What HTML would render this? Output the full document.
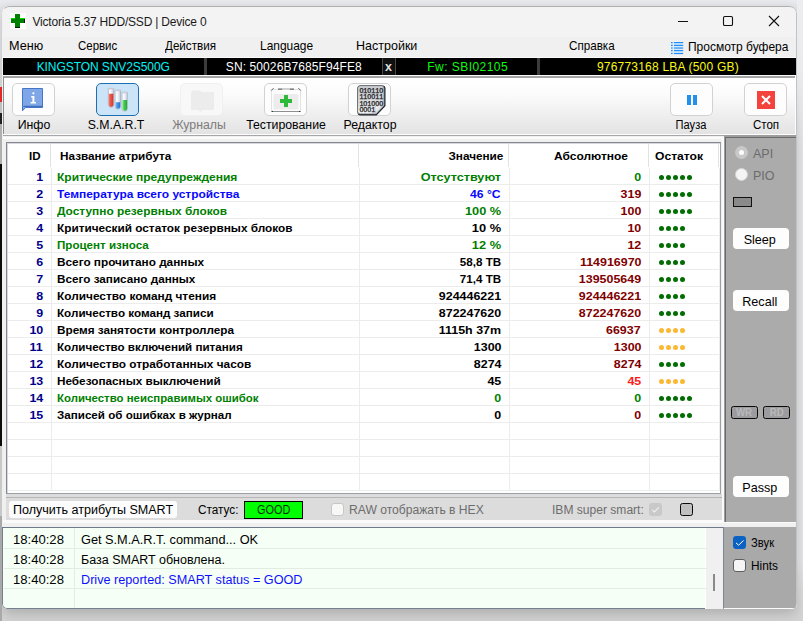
<!DOCTYPE html>
<html>
<head>
<meta charset="utf-8">
<title>Victoria 5.37 HDD/SSD | Device 0</title>
<style>
*{box-sizing:border-box;margin:0;padding:0}
html,body{width:803px;height:621px;overflow:hidden}
body{background:#e7e8eb;font-family:"Liberation Sans",sans-serif;font-size:12px;color:#000;position:relative}
.abs{position:absolute}
.bgtop{left:0;top:0;width:803px;height:12px;background:linear-gradient(#eaebef,#e1e2e6)}
.bgbot{left:0;top:560px;width:803px;height:61px;background:linear-gradient(rgba(200,200,200,0),rgba(212,212,212,1))}
.fadetr{left:797px;top:0;width:6px;height:150px;background:linear-gradient(rgba(236,237,240,1) 0%,rgba(236,237,240,.9) 45%,rgba(236,237,240,0) 100%)}
.shadow{left:2px;top:6px;width:795px;height:603px;border-radius:7px 7px 5px 5px;box-shadow:0 5px 13px 0 rgba(0,0,0,.2)}
#win{left:2px;top:6px;width:795px;height:603px;border-radius:7px 7px 5px 5px;background:#f0f0f0;overflow:hidden}
#frame{position:absolute;left:2px;top:6px;width:795px;height:603px;border-radius:7px 7px 5px 5px;border:1px solid;border-color:#b0b0b0 #c2c2c2 transparent transparent}
#inner{position:absolute;left:-2px;top:-6px;width:803px;height:621px}
.title{left:3px;top:7px;width:793px;height:30px;background:#f3f3f3}
.title .txt{left:33px;top:14px;font-size:12px;letter-spacing:-0.2px;color:#1a1a1a;white-space:nowrap}
.menu{left:3px;top:37px;width:793px;height:21px;background:#f0f0f0}
.mi{position:absolute;top:39px;font-size:12.4px;white-space:nowrap;color:#000;transform-origin:0 50%}
.strip{left:3px;top:58px;width:793px;height:17px;background:#000}
.strip span{position:absolute;top:2px;font-size:12px;white-space:nowrap;line-height:15px}
.sep{position:absolute;top:58px;width:3px;height:17px;background:#3c3c3c}
.tb{left:3px;top:76px;width:792px;height:58px;border-top:2px solid #a4a4a4;border-left:1px solid #8c8c8c;background:linear-gradient(#ffffff 0%,#fbfbfb 30%,#e3e3e3 100%)}
.tb2{left:3px;top:134px;width:793px;height:2px;background:#fdfdfd;border-bottom:1px solid #a6a6a6}
.btn{position:absolute;top:83px;width:43px;height:33px;border:1px solid #d2d2d2;border-radius:5px;background:#fdfdfd}
.btn.sel{background:#cce4f7;border-color:#1a6fb5}
.btn.dis{background:#f8f8f8;border-color:#f0f0f0}
.lbl{position:absolute;top:118px;font-size:12.3px;white-space:nowrap;text-align:center;line-height:15px}

/* table */
.tblwrap{left:6px;top:142px;width:715px;height:352px;border:1px solid #828790;border-right-color:#9a9ea6;border-bottom-color:#9a9ea6;background:#fff}
.tblin{left:7px;top:143px;width:713px;height:350px;border:1px solid #d8d8dc;border-right:none;border-bottom:none;background:#fff;overflow:hidden}
.hdr{position:absolute;left:8px;top:144px;width:711px;height:23px;background:#fff}
.hline{position:absolute;left:8px;width:711px;height:1px;background:#ececec}
.vline{position:absolute;top:144px;width:1px;height:347px;background:#ececec}
.vh{position:absolute;top:144px;width:1px;height:23px;background:#e2e2e2}
.c{position:absolute;font-weight:bold;font-size:11px;white-space:nowrap;line-height:13px;height:13px}
.c.l{transform-origin:0 50%;transform:scaleX(1.09)}
.c.r{transform-origin:100% 50%;transform:scaleX(1.09);text-align:right}
.g{color:#008000}.b{color:#0808ff}.n{color:#00008b}.m{color:#800000}.rd{color:#ff1a1a}.k{color:#000}
.dots{position:absolute;height:5px}
.dots i{position:absolute;top:0;width:5.400px;height:5.400px;border-radius:50%}
.dg i{background:#006e00}.dy i{background:#fdb833}
/* right panel */
.rp{background:#ababab;border-left:2px solid #8e8e8e;border-top:2px solid #8e8e8e}
.wbtn{position:absolute;background:#fdfdfd;border-radius:4px;font-size:12.6px;text-align:center;color:#000}
.lg{font-size:12px;line-height:14px;white-space:nowrap;transform-origin:0 50%}
.sb{font-size:12px;line-height:14px;white-space:nowrap;transform-origin:0 50%;transform:scaleX(1.04)}
.wr{top:405.800px;width:27px;height:13.100px;background:#9c9c9e;border:1.500px solid #0a0a0a;border-radius:2.500px;color:#b9b9bb;font-weight:bold;font-size:10.800px;line-height:11.800px;text-align:center}
.wr span{display:inline-block;transform:scaleX(.9)}
</style>
</head>
<body>
<div class="abs bgtop"></div><div class="abs bgbot"></div>
<div class="abs shadow"></div>
<div class="abs" style="left:0;top:58px;width:2px;height:29px;background:#d0d0d0"></div>
<div class="abs" style="left:0;top:87px;width:2px;height:15px;background:#e02828"></div>
<div class="abs" style="left:0;top:102px;width:2px;height:11px;background:#c0c0c0"></div>
<div class="abs" style="left:0;top:113px;width:2px;height:11px;background:#202020"></div>
<div class="abs" style="left:0;top:124px;width:2px;height:40px;background:#b0b0b0"></div>
<div class="abs" style="left:0;top:164px;width:2px;height:282px;background:#0c0c0c"></div>
<div class="abs" style="left:0;top:446px;width:2px;height:70px;background:#c6c9c8"></div>
<div class="abs" style="left:0;top:516px;width:2px;height:105px;background:#a9a9a9"></div>
<div class="abs fadetr"></div>
<div class="abs" id="win"><div id="inner">

<!-- title bar -->
<div class="abs title"></div>
<svg class="abs" style="left:10px;top:13px" width="16" height="16" viewBox="0 0 16 16">
  <rect width="16" height="16" fill="#fff"/>
  <path d="M5 1h5v4h5v5h-5v5h-5v-5h-4v-5h4z" fill="#008000"/>
  <path d="M1 5h4v1h-4zM10 5h5v1h-5z" fill="#00e400"/>
  <path d="M14 6h1v4h-1zM5 14h5v1h-5z" fill="#021602"/>
</svg>
<div class="abs title txt" style="background:none;width:auto;height:auto;left:32.5px;top:15px;font-size:12px;letter-spacing:-0.2px;white-space:nowrap;color:#1b1b1b">Victoria 5.37 HDD/SSD | Device 0</div>
<svg class="abs" style="left:672px;top:10px" width="120" height="24" viewBox="0 0 120 24">
  <path d="M6 11.5h10" stroke="#111" stroke-width="1" fill="none"/>
  <rect x="51.5" y="6.5" width="9" height="9" rx="1.3" stroke="#111" stroke-width="1.1" fill="none"/>
  <path d="M97 6l10 10M107 6l-10 10" stroke="#111" stroke-width="1.1" fill="none"/>
</svg>

<!-- menu -->
<div class="abs menu"></div>
<div class="mi" style="left:8.5px;transform:scaleX(1.02)">Меню</div>
<div class="mi" style="left:78px;transform:scaleX(.925)">Сервис</div>
<div class="mi" style="left:165px;transform:scaleX(.94)">Действия</div>
<div class="mi" style="left:259.5px;transform:scaleX(.963)">Language</div>
<div class="mi" style="left:355.5px;transform:scaleX(1.01)">Настройки</div>
<div class="mi" style="left:569px;transform:scaleX(.94)">Справка</div>
<svg class="abs" style="left:671px;top:41px" width="13" height="14" viewBox="0 0 13 14">
  <rect x="0" y="1.200" width="12" height="12" fill="#d4e7fb" opacity=".75"/>
  <g fill="#1e8fff"><rect x="0" y="1" width="1.600" height="1.200"/><rect x="3" y="1" width="9.200" height="1.200"/>
  <rect x="0" y="3.800" width="1.600" height="1.200"/><rect x="3" y="3.800" width="9.200" height="1.200"/>
  <rect x="0" y="9" width="1.600" height="1.200"/><rect x="3" y="9" width="9.200" height="1.200"/>
  <rect x="0" y="11.900" width="1.600" height="1.200"/><rect x="3" y="11.900" width="9.200" height="1.200"/></g>
  <g fill="#5cacf8"><rect x="0" y="6.200" width="1.600" height="1.700"/><rect x="3" y="6.200" width="9.200" height="1.700"/></g>
</svg>
<div class="mi" style="left:688px;top:40px;font-size:12.4px;transform:scaleX(.968)">Просмотр буфера</div>

<!-- black strip -->
<div class="abs strip"></div>
<div class="abs strip" style="background:none">
  <span style="left:33.7px;color:#00f4f4;letter-spacing:-0.08px">KINGSTON SNV2S500G</span>
  <span style="left:222.8px;color:#ffffff;letter-spacing:0.1px">SN: 50026B7685F94FE8</span>
  <span style="left:424.3px;color:#10fa10;letter-spacing:.45px">Fw: SBI02105</span>
  <span style="left:594px;color:#fafa14;letter-spacing:0.2px">976773168 LBA (500 GB)</span>
</div>
<div class="sep" style="left:204px"></div>
<div class="sep" style="left:537px"></div>
<div class="abs" style="left:381.500px;top:58px;width:14px;height:17px;background:#101010;border-left:1.500px solid #484848;border-right:1.500px solid #484848;color:#dedede;font-weight:bold;font-size:12.500px;line-height:18px;text-align:center">x</div>

<!-- toolbar -->
<div class="abs tb"></div><div class="abs tb2"></div><div class="abs" style="left:795px;top:76px;width:1px;height:59px;background:#fdfdfd"></div>
<div class="abs" style="left:3px;top:57px;width:793px;height:1px;background:#fbfbfb"></div><div class="abs" style="left:3px;top:75px;width:793px;height:1px;background:#fbfbfb"></div>
<!-- Инфо -->
<div class="btn" style="left:12px"></div>
<svg class="abs" style="left:20px;top:86px" width="26" height="27" viewBox="0 0 26 27">
  <path d="M2.5 2.5h20v19h-17l-3 3.3z" fill="#7fa6e6" stroke="#4676c6" stroke-width="1"/>
  <path d="M3 21h19.5v-1.2h-18.3z" fill="#3f6fc0"/>
  <rect x="12.3" y="6.2" width="2.2" height="2.2" rx="1.1" fill="#fff"/>
  <path d="M11.2 10h3.2v6h1.6v1.4h-5.4v-1.4h1.8v-4.6h-1.2z" fill="#fff"/>
</svg>
<div class="lbl" style="left:3px;width:62px">Инфо</div>
<!-- SMART -->
<div class="btn sel" style="left:96px"></div>
<svg class="abs" style="left:104px;top:86px" width="28" height="28" viewBox="0 0 28 28">
  <defs>
    <linearGradient id="gl" x1="0" x2="1"><stop offset="0" stop-color="#f4f6fb" stop-opacity=".95"/><stop offset=".35" stop-color="#ffffff" stop-opacity=".9"/><stop offset=".7" stop-color="#dfe3ee" stop-opacity=".9"/><stop offset="1" stop-color="#c3c7d6" stop-opacity=".95"/></linearGradient>
    <linearGradient id="lr" x1="0" x2="1"><stop offset="0" stop-color="#f0857b"/><stop offset=".35" stop-color="#ee5a4e"/><stop offset="1" stop-color="#d63428"/></linearGradient>
    <linearGradient id="lb" x1="0" x2="1"><stop offset="0" stop-color="#8cc0f4"/><stop offset=".35" stop-color="#4c9aea"/><stop offset="1" stop-color="#2272d0"/></linearGradient>
    <linearGradient id="lgn" x1="0" x2="1"><stop offset="0" stop-color="#8ee696"/><stop offset=".35" stop-color="#44cf50"/><stop offset="1" stop-color="#22aa30"/></linearGradient>
  </defs>
  <path d="M4.3 2.5h5.4v16.1a2.7 2.7 0 0 1 -5.4 0z" fill="url(#gl)" stroke="#a9adbd" stroke-width=".7"/><path d="M4.6499999999999995 7.7h4.7v10.900000000000002a2.35 2.35 0 0 1 -4.7 0z" fill="url(#lr)"/><rect x="3.9" y="2.2" width="6.2" height="1" rx=".5" fill="#d4d7e2" stroke="#b4b7c6" stroke-width=".3"/>
  <path d="M11.1 4.3h5.4v16.1a2.7 2.7 0 0 1 -5.4 0z" fill="url(#gl)" stroke="#a9adbd" stroke-width=".7"/><path d="M11.45 16.2h4.7v4.200000000000003a2.35 2.35 0 0 1 -4.7 0z" fill="url(#lb)"/><rect x="10.7" y="4.0" width="6.2" height="1" rx=".5" fill="#d4d7e2" stroke="#b4b7c6" stroke-width=".3"/>
  <path d="M18.0 6.4h5.4v16.1a2.7 2.7 0 0 1 -5.4 0z" fill="url(#gl)" stroke="#a9adbd" stroke-width=".7"/><path d="M18.35 14.0h4.7v8.500000000000004a2.35 2.35 0 0 1 -4.7 0z" fill="url(#lgn)"/><rect x="17.6" y="6.1000000000000005" width="6.2" height="1" rx=".5" fill="#d4d7e2" stroke="#b4b7c6" stroke-width=".3"/>
</svg>
<div class="lbl" style="left:85px;width:62px">S.M.A.R.T</div>
<!-- Журналы -->
<div class="btn dis" style="left:180px"></div>
<svg class="abs" style="left:188px;top:88px" width="28" height="26" viewBox="0 0 28 26">
  <path d="M3 4.5l2-2h7l1.5 1.5h12.5v18h-11.5l-2.2 2-1.8-2h-7.5z" fill="#ececec"/>
</svg>
<div class="lbl" style="left:168px;width:62px;color:#7c7c7c">Журналы</div>
<!-- Тестирование -->
<div class="btn" style="left:264px"></div>
<svg class="abs" style="left:270px;top:86px" width="32" height="28" viewBox="0 0 32 28">
  <rect x="1.5" y="3.5" width="29" height="22" rx="1.5" fill="#fdfdfd" stroke="#e2e2e2" stroke-width="1"/>
  <rect x="3.5" y="8" width="25" height="15.5" rx="1.5" fill="#ececec"/>
  <path d="M1.2 4.5l2.3-2.3M30.8 4.5l-2.3-2.3" stroke="#555" stroke-width="1" fill="none"/>
  <path d="M8 3.2h5M19 3.2h5" stroke="#666" stroke-width="1.2"/>
  <rect x="12" y="2" width="8" height="1.8" fill="#cfcfcf"/>
  <path d="M2 25.5h28" stroke="#7a7a7a" stroke-width=".8"/><path d="M1.5 25.5h1.500M29 25.500h1.500" stroke="#333" stroke-width="1"/>
  <path d="M14 9h4v4h4v4h-4v4h-4v-4h-4v-4h4z" fill="#2fb93a"/>
</svg>
<div class="lbl" style="left:236px;width:100px">Тестирование</div>
<!-- Редактор -->
<div class="btn" style="left:348px"></div>
<svg class="abs" style="left:355px;top:83px" width="34" height="35" viewBox="0 0 34 35">
  <defs><linearGradient id="pg" x1="0" y1="0" x2="0" y2="1"><stop offset="0" stop-color="#c9cbcd"/><stop offset=".6" stop-color="#dcdddf"/><stop offset="1" stop-color="#f6f6f6"/></linearGradient>
  <linearGradient id="fold" x1="0" y1="0" x2="1" y2="1"><stop offset="0" stop-color="#ffffff"/><stop offset="1" stop-color="#b8babd"/></linearGradient></defs>
  <path d="M5.5 2.5h22a3 3 0 0 1 3 3v17.5l-9 9.5h-16a3 3 0 0 1-3-3v-24a3 3 0 0 1 3-3z" fill="#20262c"/>
  <path d="M5.2 2.6h21.3a2.6 2.6 0 0 1 2.6 2.6v17l-8.3 8.8h-15.6a2.6 2.6 0 0 1-2.6-2.6v-23.2a2.6 2.6 0 0 1 2.6-2.600z" fill="url(#pg)" stroke="#56616b" stroke-width=".8"/>
  <path d="M29 22.3c-3-.6-6.500-.2-8.500.8c-.9 2.600-.6 5.400.300 7.800z" fill="url(#fold)" stroke="#9a9da0" stroke-width=".4"/>
  <g font-family="Liberation Mono, monospace" font-size="6.600" font-weight="400" fill="#14181d" stroke="#14181d" stroke-width=".25" letter-spacing="0">
    <text x="4.400" y="9.600">O1O11O</text><text x="4.400" y="16.200">11OO11</text><text x="4.400" y="22.500">1O1OOO</text><text x="4.400" y="28.700">OOO1</text>
  </g>
</svg>
<div class="lbl" style="left:334px;width:72px">Редактор</div>
<!-- Пауза -->
<div class="btn" style="left:670px"></div>
<div class="abs" style="left:687px;top:95px;width:4px;height:10px;background:#2392ec"></div>
<div class="abs" style="left:693px;top:95px;width:4px;height:10px;background:#2392ec"></div>
<div class="lbl" style="left:659.5px;width:62px;transform:scaleX(.9)">Пауза</div>
<!-- Стоп -->
<div class="btn" style="left:744px"></div>
<svg class="abs" style="left:757px;top:91px" width="18" height="18" viewBox="0 0 18 18">
  <rect width="18" height="18" fill="#f4433c"/>
  <path d="M5 5l8 8M13 5l-8 8" stroke="#fff" stroke-width="2" fill="none"/>
</svg>
<div class="lbl" style="left:734.5px;width:62px;transform:scaleX(.94)">Стоп</div>

<!-- table -->
<div class="abs tblwrap"></div>
<div class="abs tblin"></div>
<div class="c l k" style="left:28.8px;top:150px;transform:scaleX(1.05)">ID</div>
<div class="c l k" style="left:60px;top:150px;transform:scaleX(1.067)">Название атрибута</div>
<div class="c r k" style="right:300px;top:150px;transform:scaleX(1.07)">Значение</div>
<div class="c r k" style="right:175px;top:150px;transform:scaleX(1.088)">Абсолютное</div>
<div class="c l k" style="left:655px;top:150px;transform:scaleX(1.1)">Остаток</div>
<div class="vline" style="left:51px;top:168px;height:323px"></div><div class="vh" style="left:50px"></div>
<div class="vline" style="left:359px;top:168px;height:323px"></div><div class="vh" style="left:358px"></div>
<div class="vline" style="left:509px;top:168px;height:323px"></div><div class="vh" style="left:508px"></div>
<div class="vline" style="left:649px;top:168px;height:323px"></div><div class="vh" style="left:648px"></div>
<div class="vline" style="left:719px;top:168px;height:323px"></div><div class="vh" style="left:718px"></div>
<div class="hline" style="top:184px"></div>
<div class="hline" style="top:201px"></div>
<div class="hline" style="top:218px"></div>
<div class="hline" style="top:235px"></div>
<div class="hline" style="top:252px"></div>
<div class="hline" style="top:269px"></div>
<div class="hline" style="top:286px"></div>
<div class="hline" style="top:303px"></div>
<div class="hline" style="top:320px"></div>
<div class="hline" style="top:337px"></div>
<div class="hline" style="top:354px"></div>
<div class="hline" style="top:371px"></div>
<div class="hline" style="top:388px"></div>
<div class="hline" style="top:405px"></div>
<div class="hline" style="top:422px"></div>
<div class="hline" style="top:439px"></div>
<div class="hline" style="top:456px"></div>
<div class="hline" style="top:473px"></div>
<div class="hline" style="top:490px"></div>
<div class="c r n" style="right:760.2px;top:171px;transform:scaleX(1.13)">1</div><div class="c l g" style="left:57.3px;top:171px;transform:scaleX(1.093)">Критические предупреждения</div><div class="c r g" style="right:302px;top:171px;transform:scaleX(1.147)">Отсутствуют</div><div class="c r g" style="right:162px;top:171px;transform:scaleX(1.13)">0</div><div class="dots dg" style="left:658.6px;top:174.8px"><i style="left:0px"></i><i style="left:7px"></i><i style="left:14px"></i><i style="left:21px"></i><i style="left:28px"></i></div>
<div class="c r n" style="right:760.2px;top:188px;transform:scaleX(1.13)">2</div><div class="c l b" style="left:57.3px;top:188px;transform:scaleX(1.085)">Температура всего устройства</div><div class="c r b" style="right:302px;top:188px;transform:scaleX(1.105)">46 °C</div><div class="c r m" style="right:162px;top:188px;transform:scaleX(1.13)">319</div><div class="dots dg" style="left:658.6px;top:191.8px"><i style="left:0px"></i><i style="left:7px"></i><i style="left:14px"></i><i style="left:21px"></i><i style="left:28px"></i></div>
<div class="c r n" style="right:760.2px;top:205px;transform:scaleX(1.13)">3</div><div class="c l g" style="left:57.3px;top:205px;transform:scaleX(1.08)">Доступно резервных блоков</div><div class="c r g" style="right:302px;top:205px;transform:scaleX(1.16)">100 %</div><div class="c r m" style="right:162px;top:205px;transform:scaleX(1.13)">100</div><div class="dots dg" style="left:658.6px;top:208.8px"><i style="left:0px"></i><i style="left:7px"></i><i style="left:14px"></i><i style="left:21px"></i><i style="left:28px"></i></div>
<div class="c r n" style="right:760.2px;top:222px;transform:scaleX(1.13)">4</div><div class="c l k" style="left:57.3px;top:222px;transform:scaleX(1.073)">Критический остаток резервных блоков</div><div class="c r k" style="right:302px;top:222px;transform:scaleX(1.166)">10 %</div><div class="c r m" style="right:162px;top:222px;transform:scaleX(1.13)">10</div><div class="dots dg" style="left:658.6px;top:225.8px"><i style="left:0px"></i><i style="left:7px"></i><i style="left:14px"></i><i style="left:21px"></i></div>
<div class="c r n" style="right:760.2px;top:239px;transform:scaleX(1.13)">5</div><div class="c l g" style="left:57.3px;top:239px;transform:scaleX(1.053)">Процент износа</div><div class="c r g" style="right:302px;top:239px;transform:scaleX(1.166)">12 %</div><div class="c r m" style="right:162px;top:239px;transform:scaleX(1.13)">12</div><div class="dots dg" style="left:658.6px;top:242.8px"><i style="left:0px"></i><i style="left:7px"></i><i style="left:14px"></i><i style="left:21px"></i></div>
<div class="c r n" style="right:760.2px;top:256px;transform:scaleX(1.13)">6</div><div class="c l k" style="left:57.3px;top:256px;transform:scaleX(1.072)">Всего прочитано данных</div><div class="c r k" style="right:302px;top:256px;transform:scaleX(1.056)">58,8 TB</div><div class="c r m" style="right:162px;top:256px;transform:scaleX(1.13)">114916970</div><div class="dots dg" style="left:658.6px;top:259.8px"><i style="left:0px"></i><i style="left:7px"></i><i style="left:14px"></i><i style="left:21px"></i></div>
<div class="c r n" style="right:760.2px;top:273px;transform:scaleX(1.13)">7</div><div class="c l k" style="left:57.3px;top:273px;transform:scaleX(1.065)">Всего записано данных</div><div class="c r k" style="right:302px;top:273px;transform:scaleX(1.056)">71,4 TB</div><div class="c r m" style="right:162px;top:273px;transform:scaleX(1.13)">139505649</div><div class="dots dg" style="left:658.6px;top:276.8px"><i style="left:0px"></i><i style="left:7px"></i><i style="left:14px"></i><i style="left:21px"></i></div>
<div class="c r n" style="right:760.2px;top:290px;transform:scaleX(1.13)">8</div><div class="c l k" style="left:57.3px;top:290px;transform:scaleX(1.078)">Количество команд чтения</div><div class="c r k" style="right:302px;top:290px;transform:scaleX(1.13)">924446221</div><div class="c r m" style="right:162px;top:290px;transform:scaleX(1.13)">924446221</div><div class="dots dg" style="left:658.6px;top:293.8px"><i style="left:0px"></i><i style="left:7px"></i><i style="left:14px"></i><i style="left:21px"></i></div>
<div class="c r n" style="right:760.2px;top:307px;transform:scaleX(1.13)">9</div><div class="c l k" style="left:57.3px;top:307px;transform:scaleX(1.061)">Количество команд записи</div><div class="c r k" style="right:302px;top:307px;transform:scaleX(1.13)">872247620</div><div class="c r m" style="right:162px;top:307px;transform:scaleX(1.13)">872247620</div><div class="dots dg" style="left:658.6px;top:310.8px"><i style="left:0px"></i><i style="left:7px"></i><i style="left:14px"></i><i style="left:21px"></i></div>
<div class="c r n" style="right:760.2px;top:324px;transform:scaleX(1.13)">10</div><div class="c l k" style="left:57.3px;top:324px;transform:scaleX(1.067)">Время занятости контроллера</div><div class="c r k" style="right:302px;top:324px;transform:scaleX(1.13)">1115h 37m</div><div class="c r m" style="right:162px;top:324px;transform:scaleX(1.13)">66937</div><div class="dots dy" style="left:658.6px;top:327.8px"><i style="left:0px"></i><i style="left:7px"></i><i style="left:14px"></i><i style="left:21px"></i></div>
<div class="c r n" style="right:760.2px;top:341px;transform:scaleX(1.13)">11</div><div class="c l k" style="left:57.3px;top:341px;transform:scaleX(1.055)">Количество включений питания</div><div class="c r k" style="right:302px;top:341px;transform:scaleX(1.13)">1300</div><div class="c r m" style="right:162px;top:341px;transform:scaleX(1.13)">1300</div><div class="dots dy" style="left:658.6px;top:344.8px"><i style="left:0px"></i><i style="left:7px"></i><i style="left:14px"></i><i style="left:21px"></i></div>
<div class="c r n" style="right:760.2px;top:358px;transform:scaleX(1.13)">12</div><div class="c l k" style="left:57.3px;top:358px;transform:scaleX(1.076)">Количество отработанных часов</div><div class="c r k" style="right:302px;top:358px;transform:scaleX(1.13)">8274</div><div class="c r m" style="right:162px;top:358px;transform:scaleX(1.13)">8274</div><div class="dots dg" style="left:658.6px;top:361.8px"><i style="left:0px"></i><i style="left:7px"></i><i style="left:14px"></i><i style="left:21px"></i></div>
<div class="c r n" style="right:760.2px;top:375px;transform:scaleX(1.13)">13</div><div class="c l k" style="left:57.3px;top:375px;transform:scaleX(1.068)">Небезопасных выключений</div><div class="c r k" style="right:302px;top:375px;transform:scaleX(1.13)">45</div><div class="c r rd" style="right:162px;top:375px;transform:scaleX(1.13)">45</div><div class="dots dy" style="left:658.6px;top:378.8px"><i style="left:0px"></i><i style="left:7px"></i><i style="left:14px"></i><i style="left:21px"></i></div>
<div class="c r n" style="right:760.2px;top:392px;transform:scaleX(1.13)">14</div><div class="c l g" style="left:57.3px;top:392px;transform:scaleX(1.037)">Количество неисправимых ошибок</div><div class="c r g" style="right:302px;top:392px;transform:scaleX(1.13)">0</div><div class="c r g" style="right:162px;top:392px;transform:scaleX(1.13)">0</div><div class="dots dg" style="left:658.6px;top:395.8px"><i style="left:0px"></i><i style="left:7px"></i><i style="left:14px"></i><i style="left:21px"></i><i style="left:28px"></i></div>
<div class="c r n" style="right:760.2px;top:409px;transform:scaleX(1.13)">15</div><div class="c l k" style="left:57.3px;top:409px;transform:scaleX(1.056)">Записей об ошибках в журнал</div><div class="c r k" style="right:302px;top:409px;transform:scaleX(1.13)">0</div><div class="c r m" style="right:162px;top:409px;transform:scaleX(1.13)">0</div><div class="dots dg" style="left:658.6px;top:412.8px"><i style="left:0px"></i><i style="left:7px"></i><i style="left:14px"></i><i style="left:21px"></i><i style="left:28px"></i></div>
<!-- right panel -->
<div class="abs" style="left:3px;top:136.5px;width:721px;height:2px;background:#fbfbfb"></div>
<div class="abs" style="left:722px;top:136.5px;width:2.2px;height:386px;background:#fafafa"></div>
<div class="abs" style="left:724.2px;top:135.3px;width:72.8px;height:387.700px;background:#9e9e9e"></div>
<div class="abs" style="left:725px;top:137.3px;width:71px;height:384.300px;background:#6a6a6a"></div>
<div class="abs" style="left:726.2px;top:138.3px;width:70px;height:383.300px;background:#ababab"></div>
<div class="abs" style="left:796px;top:135.3px;width:1px;height:388px;background:#fbfbfb"></div><div class="abs" style="left:724.2px;top:521.6px;width:73px;height:1.400px;background:#fbfbfb"></div>
<div class="abs" style="left:735px;top:145.9px;width:13px;height:13px;border-radius:50%;background:#c8c8c8"></div>
<div class="abs" style="left:738.9px;top:149.8px;width:5.200px;height:5.200px;border-radius:50%;background:#fdfdfd"></div>
<div class="abs" style="left:753px;top:147px;font-size:12.5px;color:#6c6c6c;line-height:15px">API</div>
<div class="abs" style="left:735px;top:168px;width:13px;height:13px;border-radius:50%;background:#f4f4f4;border:1px solid #d4d4d4"></div>
<div class="abs" style="left:753px;top:169px;font-size:12.5px;color:#6c6c6c;line-height:15px">PIO</div>
<div class="abs" style="left:733px;top:197px;width:19px;height:10px;background:#8a8a8a;border:1px solid #111"></div>
<div class="wbtn" style="left:732.5px;top:227.5px;width:56.5px;height:21.5px;line-height:24px;text-indent:-2px">Sleep</div>
<div class="wbtn" style="left:732.5px;top:289.5px;width:56.5px;height:21.5px;line-height:24px;text-indent:-2px">Recall</div>
<div class="abs wr" style="left:730.8px"><span>WR</span></div>
<div class="abs wr" style="left:763px"><span>RD</span></div>
<div class="wbtn" style="left:732.5px;top:475.5px;width:56.5px;height:21.5px;line-height:24px;text-indent:-2px">Passp</div>
<div class="abs" style="left:724px;top:527.3px;width:73px;height:82px;background:#a9a9a9"></div>
<div class="abs" style="left:796px;top:527px;width:1px;height:82px;background:#fbfbfb"></div>
<div class="abs" style="left:732.9px;top:535.9px;width:13.200px;height:13.200px;border-radius:3.200px;background:#0a63c2"></div>
<svg class="abs" style="left:732.9px;top:535.9px" width="14" height="14" viewBox="0 0 14 14"><path d="M3 6.900l2.600 2.300l4.900-4.700" stroke="#fff" stroke-width="1" fill="none"/></svg>
<div class="abs" style="left:751px;top:536px;font-size:12.5px;line-height:15px;transform:scaleX(.9);transform-origin:0 50%">Звук</div>
<div class="abs" style="left:733.2px;top:559.2px;width:12.600px;height:12.600px;border-radius:3px;background:#f5f5f5;border:1px solid #5e5e5e"></div>
<div class="abs" style="left:751px;top:559px;font-size:12.5px;line-height:15px;transform:scaleX(.945);transform-origin:0 50%">Hints</div>
<!-- status bar -->
<div class="abs" style="left:6px;top:494px;width:716px;height:26px;background:#dcdcdc"></div>
<div class="abs" style="left:6px;top:497px;width:716px;height:1px;background:#b6b6b6"></div>
<div class="abs" style="left:3px;top:520px;width:721px;height:2.500px;background:#fafafa"></div>
<div class="abs" style="left:3px;top:522.5px;width:721px;height:5px;background:#f0f0f0"></div>
<div class="abs" style="left:9px;top:501px;width:167.5px;height:17px;background:#fcfcfc;border-radius:3px"></div>
<div class="abs sb" style="left:13.2px;top:503px;transform:scaleX(1.045)">Получить атрибуты SMART</div>
<div class="abs sb" style="left:198px;top:503px;transform:scaleX(.98)">Статус:</div>
<div class="abs" style="left:244px;top:501px;width:58.5px;height:17.5px;background:#00ff00;border:1px solid #000"></div>
<div class="abs sb" style="left:256.5px;top:502.8px;color:#063006;transform:scaleX(.91)">GOOD</div>
<div class="abs" style="left:331.4px;top:502.9px;width:12.800px;height:12.800px;border-radius:3px;background:#f7f7f7;border:1px solid #c6c6c6"></div>
<div class="abs sb" style="left:348.5px;top:503px;color:#6d6d6d;transform:scaleX(1.01)">RAW отображать в HEX</div>
<div class="abs sb" style="left:551.5px;top:503px;color:#6d6d6d;transform:scaleX(1.005)">IBM super smart:</div>
<div class="abs" style="left:648.8px;top:503px;width:13px;height:13px;border-radius:3px;background:#c9c9c9"></div>
<svg class="abs" style="left:648.8px;top:503px" width="13" height="13" viewBox="0 0 13 13"><path d="M3.2 6.800l2.200 2.200l4.400-4.600" stroke="#f2f2f2" stroke-width="1.100" fill="none"/></svg>
<div class="abs" style="left:679.8px;top:502.8px;width:13.500px;height:13.500px;border-radius:2.500px;background:#c0c0c0;border:1.500px solid #0a0a0a"></div>
<!-- log -->
<div class="abs" style="left:2px;top:527.3px;width:722px;height:81.700px;background:#f5fff5;border:1px solid #74808e;border-top-color:#6e7a8c;border-right-color:#7a8798;border-radius:0 0 0 5px"></div>
<div class="abs" style="left:705px;top:528.3px;width:1px;height:81px;background:#fff"></div><div class="abs" style="left:706px;top:528.3px;width:17px;height:81px;background:#f0f0f0"></div>
<div class="abs" style="left:713px;top:574px;width:2px;height:17px;background:#8a8a8a"></div>
<div class="abs" style="left:74px;top:528.3px;width:1px;height:79.700px;background:#e3ece3"></div>
<div class="abs" style="left:4px;top:548px;width:703px;height:1px;background:#e3ece3"></div>
<div class="abs" style="left:4px;top:568px;width:703px;height:1px;background:#e3ece3"></div>
<div class="abs" style="left:4px;top:588px;width:703px;height:1px;background:#e3ece3"></div>
<div class="abs lg" style="left:12.5px;top:532.5px;transform:scaleX(1.09)">18:40:28</div><div class="abs lg" style="left:80.5px;top:532.5px;color:#000;transform:scaleX(1.062)">Get S.M.A.R.T. command... OK</div>
<div class="abs lg" style="left:12.5px;top:552.5px;transform:scaleX(1.09)">18:40:28</div><div class="abs lg" style="left:80.5px;top:552.5px;color:#000;transform:scaleX(1.042)">База SMART обновлена.</div>
<div class="abs lg" style="left:12.5px;top:572.5px;transform:scaleX(1.09)">18:40:28</div><div class="abs lg" style="left:80.5px;top:572.5px;color:#1010ff;transform:scaleX(1.055)">Drive reported: SMART status = GOOD</div>

<div id="frame"></div>
<div class="abs" style="left:724px;top:608px;width:73px;height:1px;background:#fbfbfb"></div>
</div></div>
</body>
</html>
